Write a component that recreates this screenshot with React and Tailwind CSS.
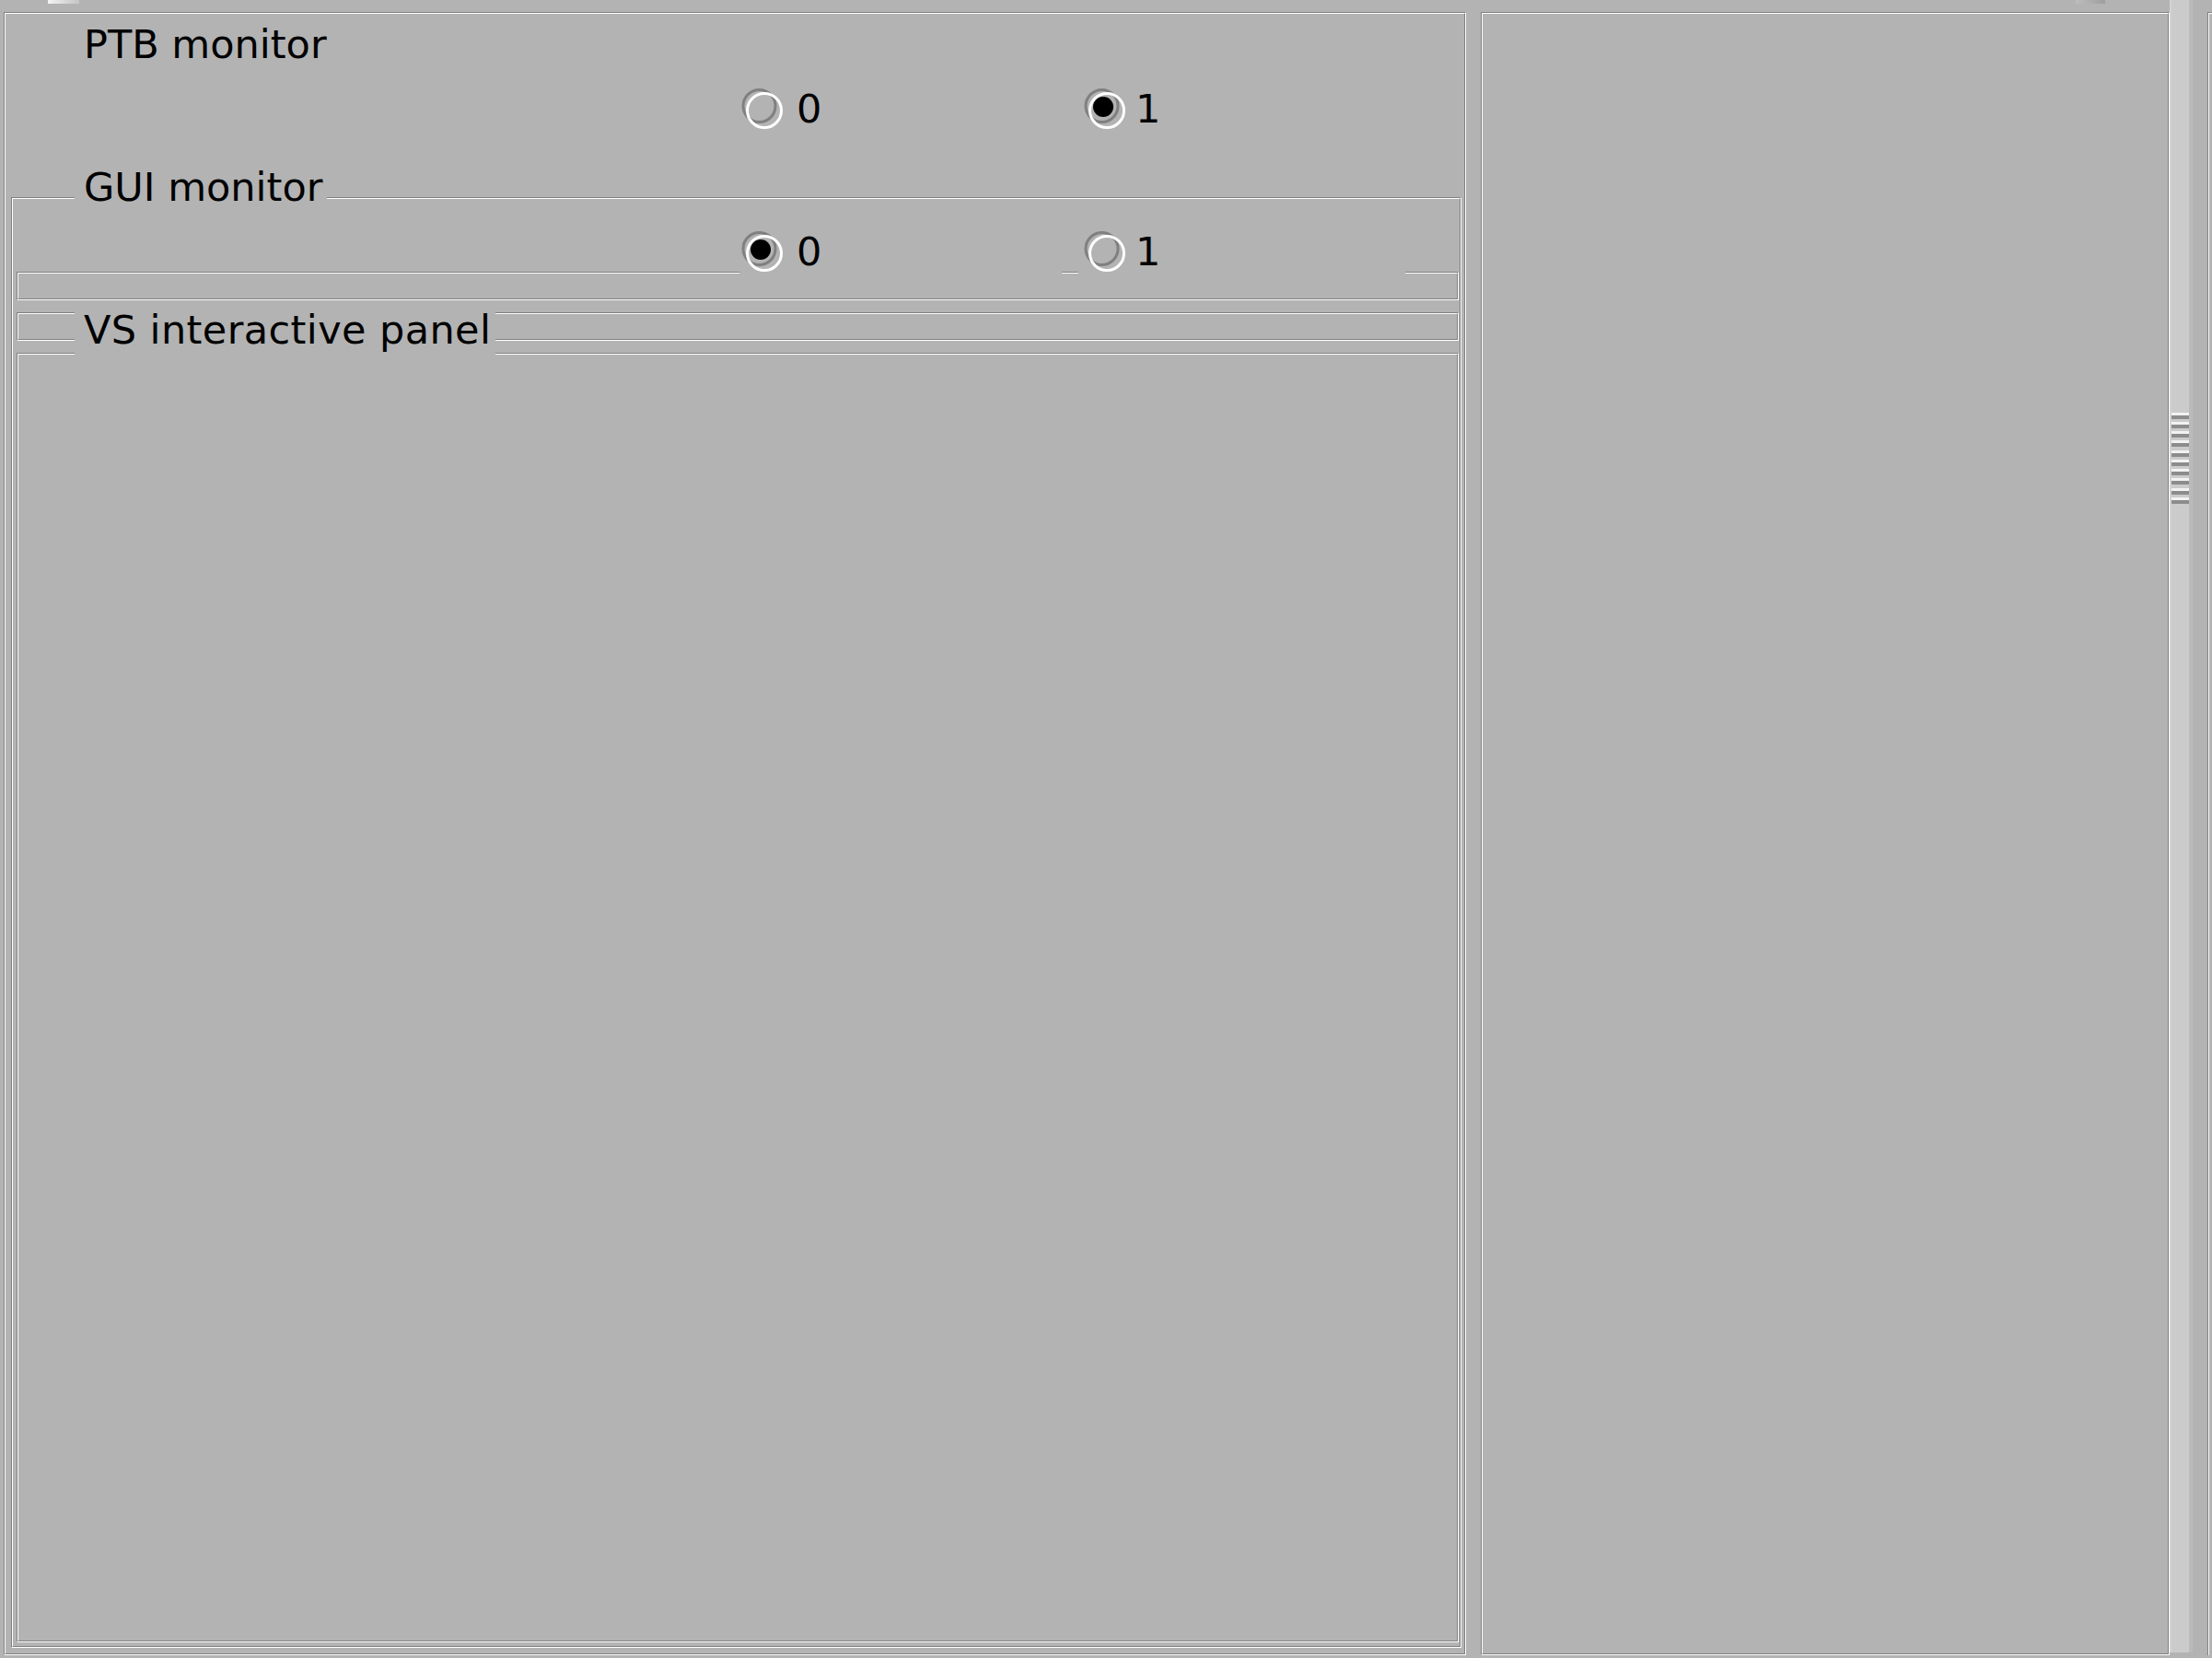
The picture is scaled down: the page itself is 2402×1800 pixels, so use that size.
import React from "react";

function Etched({ className = "", innerClassName = "", children }) {
  return (
    <div
      className={
        "border-t border-l border-b border-r border-t-[#808080] border-l-[#808080] border-b-white border-r-white " +
        className
      }
    >
      <div
        className={
          "h-full w-full border-t border-l border-b border-r border-t-white border-l-white border-b-[#808080] border-r-[#808080] " +
          innerClassName
        }
      >
        {children}
      </div>
    </div>
  );
}

function RadioIcon({ checked }) {
  return (
    <svg width="46" height="46" viewBox="0 0 46 46" className="shrink-0">
      <circle cx="19.5" cy="20" r="17.5" fill="none" stroke="#808080" strokeWidth="3" />
      <circle cx="25" cy="25" r="18.5" fill="none" stroke="#ffffff" strokeWidth="3" />
      {checked && <circle cx="21" cy="21" r="11" fill="#000000" />}
    </svg>
  );
}

function Radio({ label, checked, className, textClass }) {
  return (
    <div className={"relative z-10 flex h-[48px] items-center bg-[#b3b3b3] " + className}>
      <RadioIcon checked={checked} />
      <span className={"leading-[48px] " + textClass}>{label}</span>
    </div>
  );
}

function RadioRow({ a, b, className }) {
  return (
    <div className={"relative z-10 flex h-[48px] shrink-0 " + className}>
      <Radio label="0" checked={a} className="w-[350px] pl-[2px]" textClass="ml-[14px]" />
      <Radio label="1" checked={b} className="ml-[18px] w-[355px] pl-[6px]" textClass="ml-[10px]" />
    </div>
  );
}

export default function App() {
  return (
    <div className="flex h-[1800px] w-[2402px] overflow-hidden bg-[#b3b3b3] font-['DejaVu_Sans',sans-serif] text-[43px] text-black">
      {/* main column */}
      <div className="flex w-[2356px] shrink-0 flex-col">
        <div className="flex h-[13px] shrink-0 items-start">
          <div className="ml-[52px] h-[4px] w-[34px] bg-linear-to-r from-[#f4f4f4] to-[#c4c4c4]" />
          <div className="ml-auto mr-[70px] h-[4px] w-[32px] bg-linear-to-r from-[#bdbdbd] to-[#9e9e9e]" />
        </div>
        <div className="flex">
          {/* left panel */}
          <Etched className="ml-[4px] h-[1784px] w-[1588px] shrink-0" innerClassName="flex flex-col">
            <div className="ml-[85px] mt-[9px] h-[48px] shrink-0 leading-[48px]">PTB monitor</div>
            <RadioRow a={false} b={true} className="ml-[797px] mt-[22px]" />
            <div className="relative ml-[6px] mt-[72px] shrink-0">
              <Etched className="h-[1575px] w-[1575px]" innerClassName="flex flex-col">
                <RadioRow a={true} b={false} className="ml-[789px] mt-[33px]" />
                <Etched className="-mt-[2px] ml-[4px] h-[31px] w-[1566px] shrink-0" />
                <div className="relative ml-[4px] mt-[13px] flex w-[1566px] flex-col">
                  <Etched className="h-[31px] w-full shrink-0" />
                  <Etched className="mt-[13px] h-[1400px] w-full shrink-0" />
                  <div className="absolute left-[63px] top-[-5px] z-20 h-[52px] w-[457px] bg-[#b3b3b3] pl-[10px] leading-[48px] tracking-[0.4px] whitespace-nowrap">
                    VS interactive panel
                  </div>
                </div>
              </Etched>
              <div className="absolute left-[69px] top-[-35px] z-20 h-[48px] w-[274px] bg-[#b3b3b3] pl-[10px] leading-[48px] whitespace-nowrap">
                GUI monitor
              </div>
            </div>
          </Etched>
          {/* right panel */}
          <Etched className="ml-[16px] h-[1784px] w-[748px] shrink-0" />
        </div>
      </div>

      {/* scrollbar */}
      <div className="flex h-[1794px] w-[21px] shrink-0 flex-col border-l-2 border-l-[#d3d3d3] bg-[#cbcbcb] pt-[448px]">
        {Array.from({ length: 10 }).map((_, i) => (
          <div
            key={i}
            className={
              i === 3 || i === 7
                ? "flex h-[11px] shrink-0 flex-col"
                : "flex h-[10px] shrink-0 flex-col"
            }
          >
            <div className="h-[3px] bg-[#f2f2f2]" />
            <div className="h-[4px] bg-[#8c8c8c]" />
          </div>
        ))}
      </div>

      {/* right edge */}
      <div className="h-[1794px] w-[4px] shrink-0 bg-[#bababa]" />
      <div className="flex-1 pl-[16px] pt-[13px]">
        <div className="h-[1784px] border-t border-l border-t-[#808080] border-l-[#808080]">
          <div className="h-full border-t border-l border-t-white border-l-white" />
        </div>
      </div>
    </div>
  );
}
